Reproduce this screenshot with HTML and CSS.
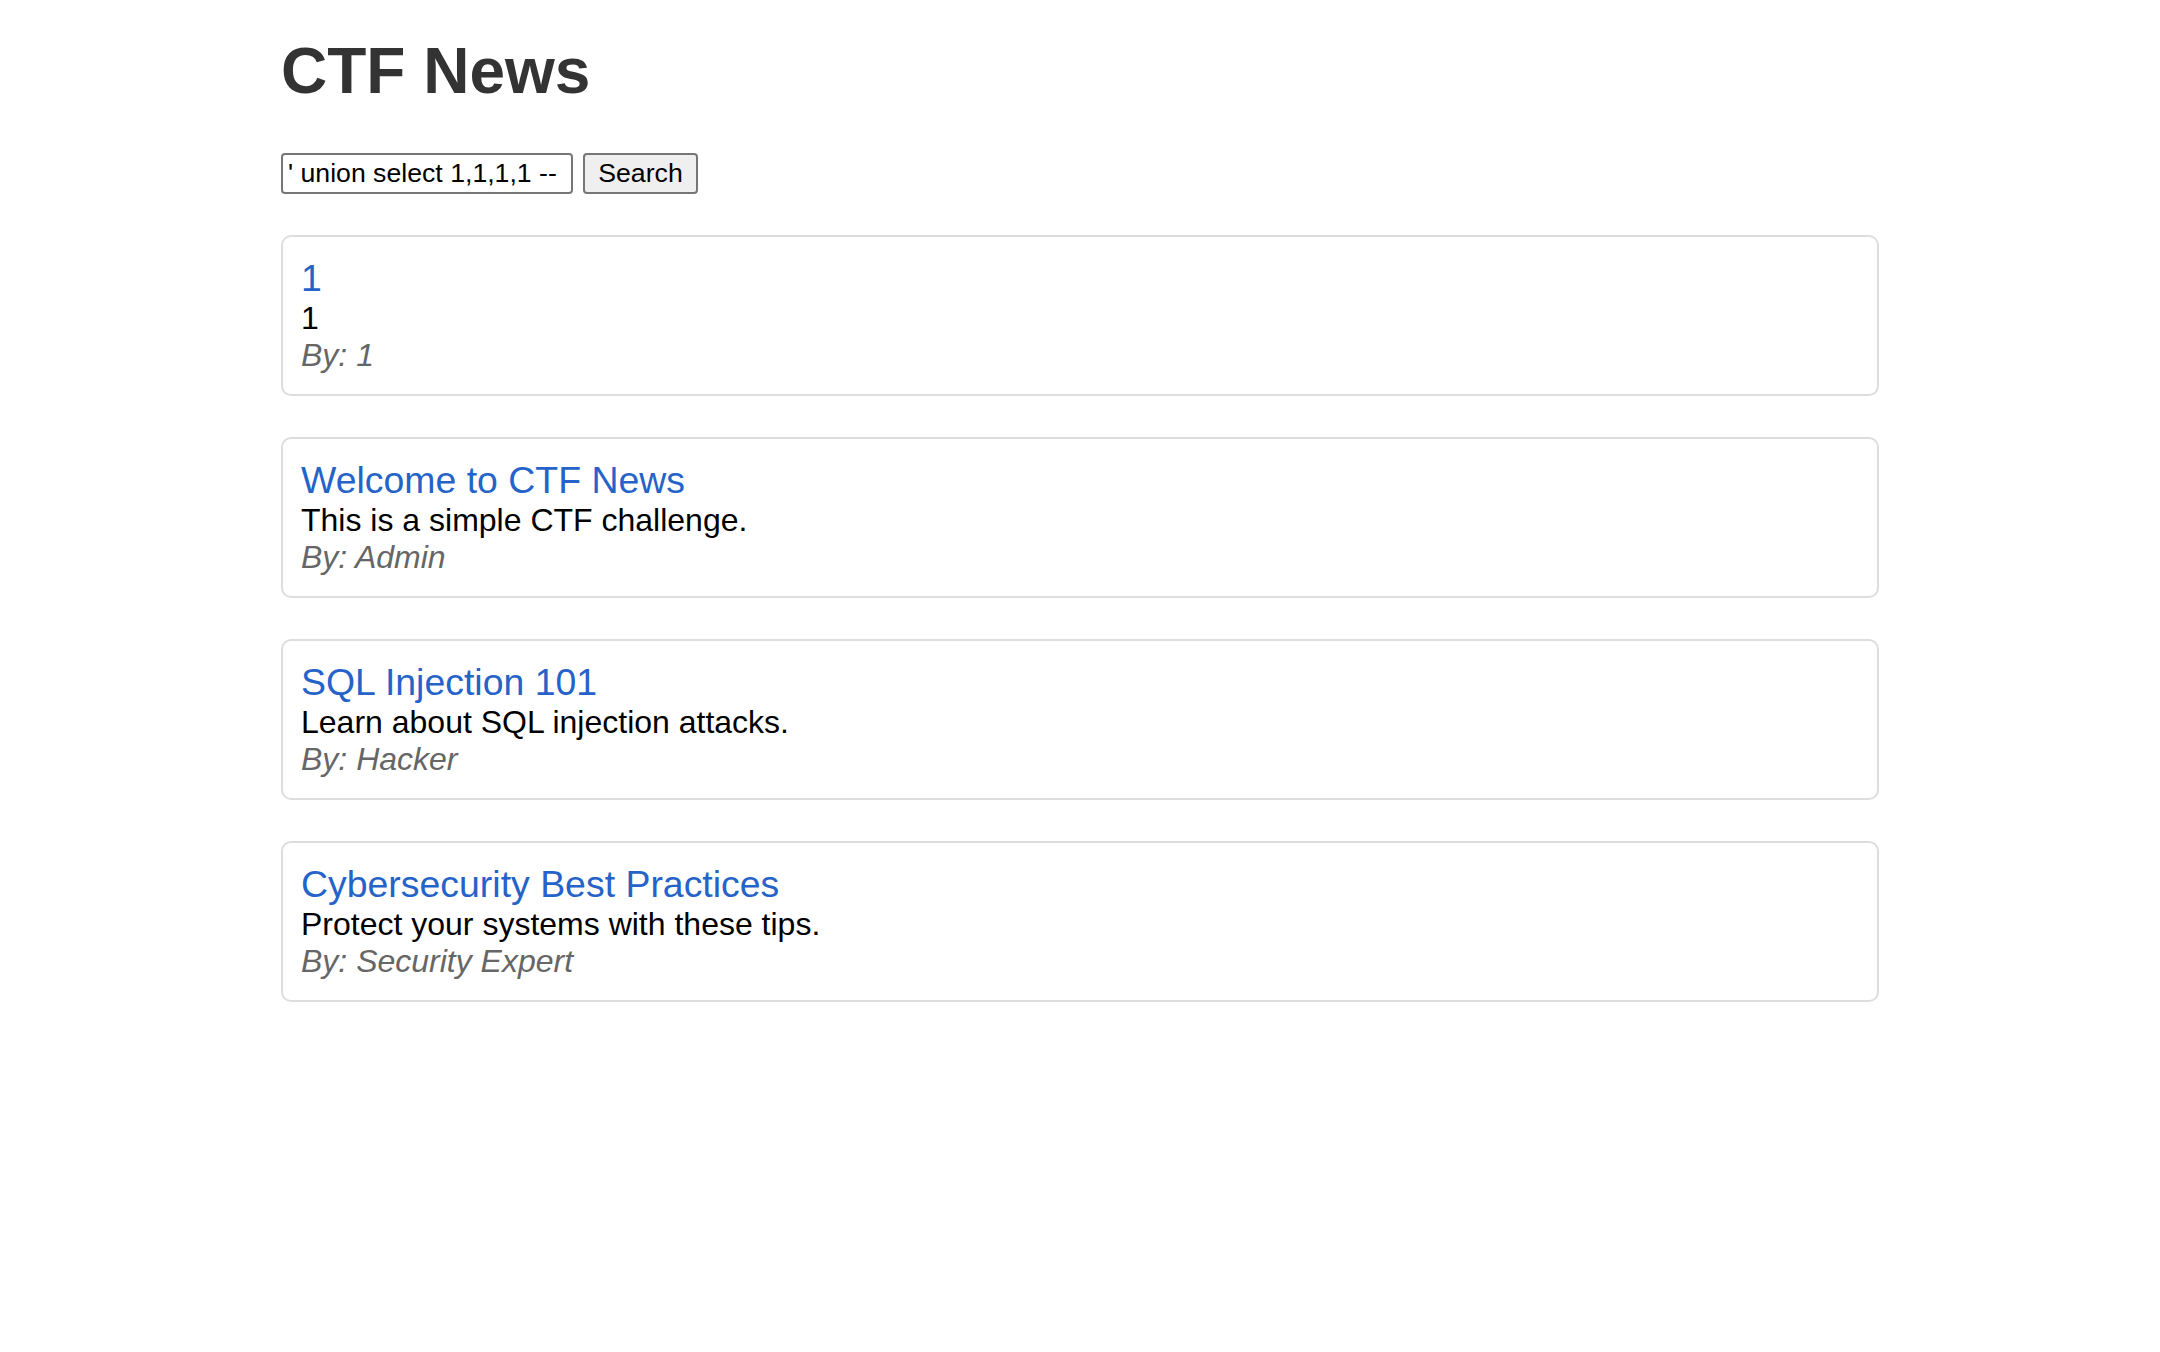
FILE: index.html
```html
<!DOCTYPE html>
<html lang="en">
<head>
<meta charset="utf-8">
<title>CTF News</title>
<link rel="stylesheet" href="styles.css">
</head>
<body>
<div class="container">
  <h1 class="title">CTF News</h1>
  <form class="search">
    <input class="search-input" type="text" value="' union select 1,1,1,1 --">
    <button class="search-btn" type="button">Search</button>
  </form>
  <div class="news">
    <div class="card">
      <a class="card-title" href="#">1</a>
      <div class="card-text">1</div>
      <div class="card-by">By: 1</div>
    </div>
    <div class="card">
      <a class="card-title" href="#">Welcome to CTF News</a>
      <div class="card-text">This is a simple CTF challenge.</div>
      <div class="card-by">By: Admin</div>
    </div>
    <div class="card">
      <a class="card-title" href="#">SQL Injection 101</a>
      <div class="card-text">Learn about SQL injection attacks.</div>
      <div class="card-by">By: Hacker</div>
    </div>
    <div class="card">
      <a class="card-title" href="#">Cybersecurity Best Practices</a>
      <div class="card-text">Protect your systems with these tips.</div>
      <div class="card-by">By: Security Expert</div>
    </div>
  </div>
</div>
</body>
</html>
```
FILE: styles.css
```css
html, body {
  margin: 0;
  padding: 0;
  background: #fff;
}
body {
  font-family: "Liberation Sans", Arial, sans-serif;
  font-size: 32px;
  color: #000;
}
.container {
  width: 1598px;
  margin: 0 0 0 281px;
}
.title {
  margin: 34px 0 0 0;
  font-size: 64px;
  font-weight: bold;
  color: #333;
  line-height: normal;
}
.search {
  display: flex;
  align-items: center;
  gap: 10px;
  margin: 45px 0 0 0;
}
.search-input {
  box-sizing: border-box;
  width: 292px;
  height: 41px;
  padding: 2px 5px;
  border: 2px solid #767676;
  border-radius: 4px;
  font-family: "Liberation Sans", Arial, sans-serif;
  font-size: 26.67px;
  color: #000;
  background: #fff;
  outline: none;
}
.search-btn {
  box-sizing: border-box;
  width: 115px;
  height: 41px;
  padding: 2px 12px;
  border: 2px solid #767676;
  border-radius: 4px;
  background: #efefef;
  font-family: "Liberation Sans", Arial, sans-serif;
  font-size: 26.67px;
  color: #000;
}
.news {
  display: flex;
  flex-direction: column;
  gap: 41px;
  margin-top: 41px;
}
.card {
  display: flex;
  flex-direction: column;
  padding: 20px 18px;
  border: 2px solid #ddd;
  border-radius: 10px;
}
.card-title {
  font-size: 37.44px;
  line-height: normal;
  color: #2563c9;
  text-decoration: none;
  align-self: flex-start;
}
.card-text {
  line-height: normal;
}
.card-by {
  line-height: normal;
  font-style: italic;
  color: #666;
}
```
